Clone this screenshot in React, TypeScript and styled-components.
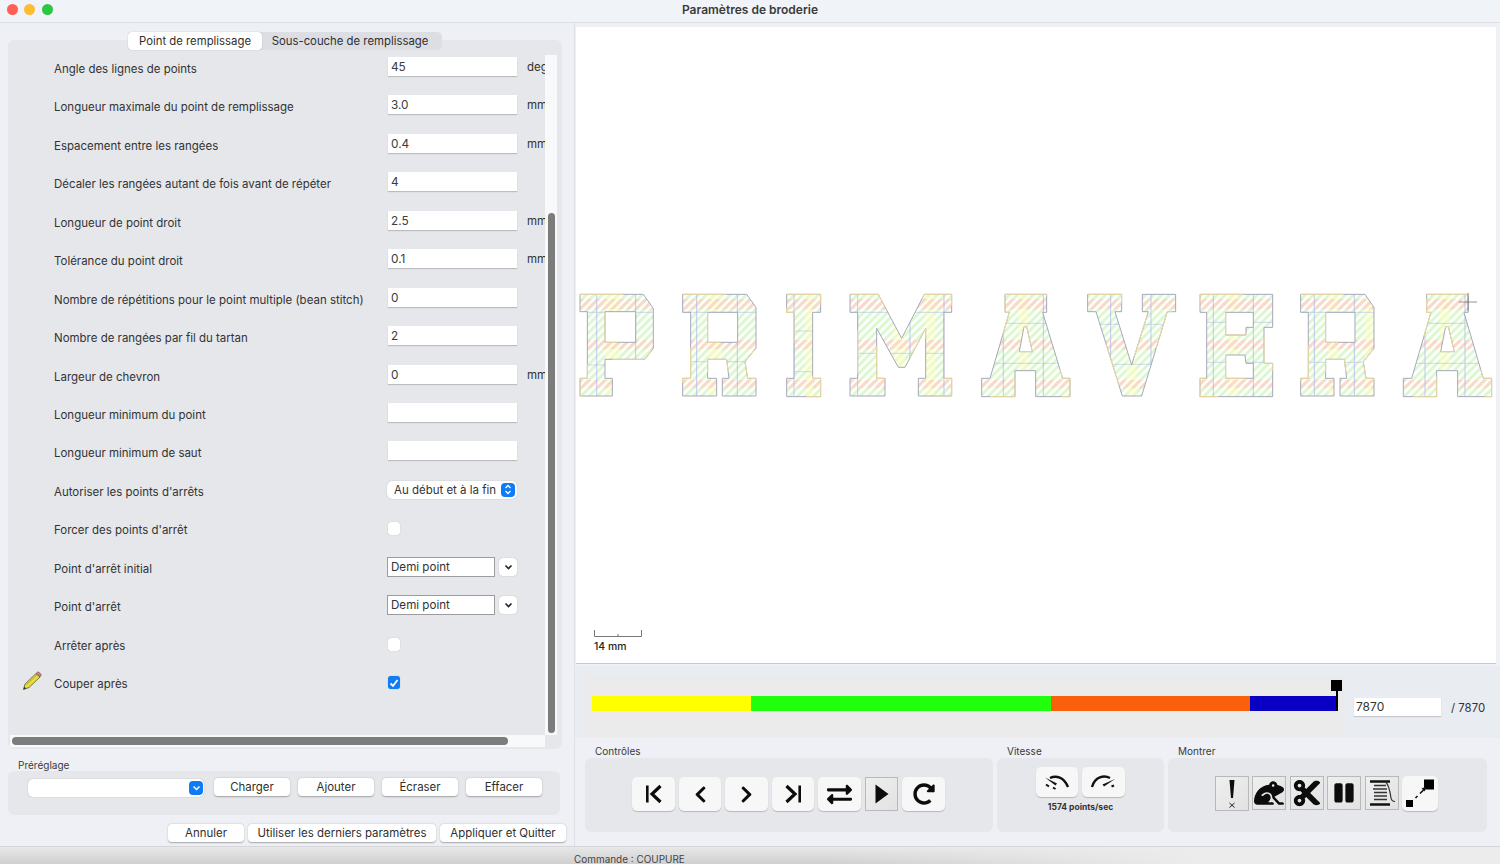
import { FunctionComponent } from "react";
import styled, { createGlobalStyle } from "styled-components";
import { FaChevronLeft, FaChevronRight, FaCut, FaExchangeAlt, FaFrog, FaPause, FaRedoAlt } from "react-icons/fa";

const GlobalStyle = createGlobalStyle`
  html, body { margin: 0; padding: 0; width: 1500px; height: 864px; overflow: hidden; }
  body { font-family: Inter, "Liberation Sans", sans-serif; color: #333; }
  * { box-sizing: border-box; }
`;

const Window = styled.div`
  width: 1500px;
  height: 864px;
  display: flex;
  flex-direction: column;
  background: #eef0f5;
`;

const TitleBar = styled.div`
  height: 23px;
  flex: none;
  display: flex;
  align-items: center;
  padding: 0 0 3px 6.5px;
  gap: 6.5px;
  border-bottom: 1px solid #dcdfe3;
  background: #f0f3f8;
`;

const Light = styled.span<{ $color: string }>`
  width: 11px;
  height: 11px;
  border-radius: 50%;
  background: ${(p) => p.$color};
`;

const Title = styled.div`
  position: absolute;
  left: 0;
  width: 1500px;
  text-align: center;
  font-size: 12px;
  font-weight: 600;
  color: #3a3a3a;
`;

const Body = styled.div`
  height: 824px;
  flex: none;
  display: flex;
  border-bottom: 1px solid #d3d5d9;
`;

const LeftPane = styled.div`
  width: 575px;
  flex: none;
  display: flex;
  flex-direction: column;
  border-right: 1px solid #dfe1e5;
  margin-right: 0;
`;

const Tabs = styled.div`
  position: relative;
  z-index: 1;
  margin: 9px 0 0 128px;
  width: 314px;
  height: 18px;
  display: flex;
  background: #dcdee3;
  border-radius: 5px;
  font-size: 11.35px;
`;

const Tab = styled.div<{ $active?: boolean }>`
  width: ${(p) => (p.$active ? 134 : 176)}px;
  display: flex;
  align-items: center;
  justify-content: center;
  border-radius: 4px;
  color: #2f2f2f;
  background: ${(p) => (p.$active ? "#ffffff" : "transparent")};
  box-shadow: ${(p) => (p.$active ? "0 0 1px rgba(0,0,0,.35)" : "none")};
`;

const TabPanel = styled.div`
  margin: -10px 0 0 8px;
  width: 554px;
  height: 709px;
  padding: 15px 5px 0 2px;
  background: #e5e7eb;
  border-radius: 6px;
`;

const ScrollArea = styled.div`
  display: grid;
  grid-template-columns: 535px 12px;
  grid-template-rows: 680px 12px;
`;

const Form = styled.div`
  overflow: hidden;
`;

const Row = styled.div`
  height: 38.45px;
  display: flex;
  align-items: flex-start;
  width: 560px;
  font-size: 11.47px;
  color: #333;
`;

const IconSlot = styled.div`
  width: 44px;
  flex: none;
  padding: 1px 0 0 12px;
`;

const Label = styled.div`
  width: 334px;
  flex: none;
  margin-top: 6px;
  line-height: 16px;
`;

const TextInput = styled.div`
  width: 129px;
  height: 19px;
  margin-top: 2px;
  padding: 1px 0 0 3px;
  background: #fff;
  font-size: 11.8px;
  line-height: 18px;
  color: #3c3c3c;
  box-shadow: 0 1px 1px rgba(0, 0, 0, 0.18);
`;

const Unit = styled.div`
  margin: 4px 0 0 10px;
  font-size: 11.47px;
  line-height: 16px;
`;

const Select = styled.div`
  width: 130px;
  height: 18px;
  margin: 0 0 0 -1px;
  position: relative;
  top: 3px;
  display: flex;
  align-items: center;
  justify-content: space-between;
  padding: 0 2px 0 7px;
  background: #fff;
  border-radius: 5px;
  font-size: 11.47px;
  box-shadow: 0 0 1px rgba(0, 0, 0, 0.35);
`;

const BlueCap = styled.span`
  width: 14px;
  height: 14px;
  background: #0f7cf6;
  border-radius: 4px;
  display: flex;
  align-items: center;
  justify-content: center;
`;

const Check = styled.div<{ $on?: boolean }>`
  width: 12px;
  height: 13px;
  margin-top: 6px;
  border-radius: 3px;
  background: ${(p) => (p.$on ? "#0f7cf6" : "#fff")};
  box-shadow: 0 0 1px rgba(0, 0, 0, 0.3);
  display: flex;
  align-items: center;
  justify-content: center;
`;

const ComboEntry = styled.div`
  width: 108px;
  height: 20px;
  margin: 2px 0 0 -1px;
  padding-left: 3px;
  background: #fff;
  border: 1px solid #9c9c9c;
  font-size: 11.6px;
  line-height: 19px;
`;

const ComboButton = styled.div`
  width: 18px;
  height: 18px;
  margin: 3px 0 0 4px;
  background: #fff;
  border-radius: 4px;
  box-shadow: 0 0 1px rgba(0, 0, 0, 0.35);
  display: flex;
  align-items: center;
  justify-content: center;
`;

const VTrack = styled.div`
  background: #f8f9fa;
  padding: 158px 0 0 3px;
`;

const VThumb = styled.div`
  width: 7px;
  height: 520px;
  border-radius: 4px;
  background: #7c7c7c;
`;

const HTrack = styled.div`
  background: #f8f9fa;
  padding: 2px 0 0 2px;
`;

const HThumb = styled.div`
  width: 496px;
  height: 8px;
  border-radius: 4px;
  background: #7c7c7c;
`;

const GroupLabel = styled.div`
  height: 14px;
  padding-left: 10px;
  font-size: 10px;
  line-height: 14px;
  color: #3a3a3a;
`;

const PresetLabel = styled(GroupLabel)`
  margin: 10px 0 0 8px;
  height: 12px;
  line-height: 13px;
`;

const PresetBox = styled.div`
  margin-left: 8px;
  width: 552px;
  height: 44px;
  display: flex;
  gap: 8px;
  align-items: flex-start;
  padding: 7px 0 0 20px;
  background: #e5e7eb;
  border-radius: 6px;
`;

const PresetCombo = styled.div`
  width: 176px;
  height: 18px;
  margin: 1px 2px 0 0;
  display: flex;
  justify-content: flex-end;
  align-items: center;
  padding-right: 1px;
  background: #fff;
  border-radius: 5px;
  box-shadow: 0 0 1px rgba(0, 0, 0, 0.35);
`;

const PushButton = styled.div<{ $w: number }>`
  width: ${(p) => p.$w}px;
  height: 18px;
  display: flex;
  align-items: center;
  justify-content: center;
  background: #fff;
  border-radius: 4px;
  font-size: 11.45px;
  color: #2f2f2f;
  box-shadow: 0 0.5px 1.5px rgba(0, 0, 0, 0.3);
`;

const DialogButtons = styled.div`
  margin-top: 9px;
  padding-left: 168px;
  display: flex;
  gap: 4px;
`;

const RightPane = styled.div`
  flex: 1;
  min-width: 0;
  padding-top: 4px;
  display: flex;
  flex-direction: column;
`;

const Canvas = styled.div`
  position: relative;
  margin-left: 1px;
  width: 920px;
  height: 637px;
  flex: none;
  background: #fff;
  border-bottom: 1px solid #c6c8cb;
`;

const CanvasDrawing = styled.svg`
  display: block;
`;

const ScaleBar = styled.div`
  position: absolute;
  left: 18px;
  top: 603px;
  font-size: 10.4px;
  font-weight: 500;
  color: #222;
`;

const ScaleTicks = styled.svg`
  display: block;
  margin-bottom: 3px;
`;

const SliderBand = styled.div`
  margin-top: 2px;
  height: 72px;
  padding: 9px 0 0 10px;
  display: flex;
  background: #e9ecf1;
`;

const SliderBox = styled.div`
  position: relative;
  width: 760px;
  height: 62px;
  padding: 21px 0 0 7px;
  background: #ebebeb;
`;

const ColorBar = styled.div`
  width: 744px;
  height: 15px;
  display: flex;
`;

const ColorSegment = styled.div<{ $w: number; $color: string }>`
  width: ${(p) => p.$w}px;
  background: ${(p) => p.$color};
`;

const HandleTop = styled.div`
  position: absolute;
  left: 746px;
  top: 5px;
  width: 11px;
  height: 11px;
  background: #000;
`;

const HandleStem = styled.div`
  position: absolute;
  left: 751px;
  top: 16px;
  width: 1.5px;
  height: 20px;
  background: #000;
`;

const StepInput = styled.div`
  width: 87px;
  height: 18px;
  margin: 23px 0 0 9px;
  padding-left: 2px;
  background: #fff;
  font-size: 12px;
  line-height: 18px;
  box-shadow: 0 1px 1px rgba(0, 0, 0, 0.15);
`;

const StepTotal = styled.div`
  margin: 24px 0 0 10px;
  font-size: 11.42px;
  line-height: 18px;
`;

const Groups = styled.div`
  margin-top: 6px;
  padding-left: 10px;
  display: flex;
  gap: 4px;
`;

const GroupBox = styled.div<{ $w: number; $top: number }>`
  width: ${(p) => p.$w}px;
  height: 74px;
  display: flex;
  flex-direction: column;
  align-items: center;
  padding-top: ${(p) => p.$top}px;
  background: #e5e7eb;
  border-radius: 6px;
`;

const ToolRow = styled.div<{ $gap: number; $offset?: number }>`
  display: flex;
  gap: ${(p) => p.$gap}px;
  margin-left: ${(p) => p.$offset || 0}px;
`;

const ToolButton = styled.div<{ $w: number; $h: number; $pressed?: boolean }>`
  width: ${(p) => p.$w}px;
  height: ${(p) => p.$h}px;
  display: flex;
  align-items: center;
  justify-content: center;
  color: #0c0c0c;
  background: ${(p) => (p.$pressed ? "linear-gradient(135deg,#efefef,#e2e2e2)" : "#f7f7f7")};
  border: ${(p) => (p.$pressed ? "1px solid #b9b9b9" : "none")};
  border-radius: ${(p) => (p.$pressed ? 0 : 5)}px;
  box-shadow: ${(p) => (p.$pressed ? "none" : "0 1px 1px rgba(0,0,0,.2)")};
`;

const SpeedText = styled.div`
  margin-top: 5px;
  font-size: 8.5px;
  font-weight: 700;
  line-height: 11px;
  color: #333;
`;

const StatusBar = styled.div`
  flex: 1;
  padding-left: 574px;
  font-size: 9.95px;
  line-height: 24px;
  color: #444;
  overflow: hidden;
  background: linear-gradient(90deg, rgba(236, 236, 236, 0) 55%, #ececec 80%), linear-gradient(180deg, #e8e8e8, #cfcfcf);
`;

type Letter = {
  id: string;
  origin: [number, number];
  d: string;
  v: number[];
  h: number[];
  y: [number, number][];
};

const LETTERS: Letter[] = [
  {
    id: "p",
    origin: [575, 280],
    d: "M15 43H205L235 85V205L210 238H90V295H112V348H15V295H37V95H15ZM90 95V187H182V95Z",
    v: [65, 182],
    h: [97, 255],
    y: [[90, 135]],
  },
  {
    id: "r",
    origin: [575, 280],
    d: "M323 43H515L543 82V205L510 245L518 295H543V348H442V295H462L455 238H398V295H425V348H323V295H347V97H323ZM398 97V187H488V97Z",
    v: [365, 487],
    h: [97, 245],
    y: [[400, 440]],
  },
  {
    id: "i",
    origin: [575, 280],
    d: "M635 43H737V97H713V295H737V350H635V295H657V97H635Z",
    v: [657],
    h: [153, 275],
    y: [[690, 715]],
  },
  {
    id: "m",
    origin: [870, 280],
    d: "M-60 43H25L95 175L163 43H245V97H222V295H245V348H145V295H167V145L105 262H85L20 145V295H45V348H-60V295H-37V97H-60Z",
    v: [-37, 120, 222],
    h: [97, 220],
    y: [[165, 195], [70, 105]],
  },
  {
    id: "a",
    origin: [870, 280],
    d: "M405 43H530V97H518L578 295H600V350H497V272H435V350H335V295H360L418 97H405ZM448 215H487L470 140H462Z",
    v: [400, 520],
    h: [130, 250],
    y: [[445, 475]],
  },
  {
    id: "v",
    origin: [870, 280],
    d: "M653 43H755V95H735L785 255L835 95H817V43H917V95H892L815 348H757L678 95H653Z",
    v: [722, 843],
    h: [133, 253],
    y: [[770, 800]],
  },
  {
    id: "e",
    origin: [1190, 280],
    d: "M30 43H248V142H222V250H248V350H30V295H50V97H30ZM107 97V165H168V142H190V97ZM107 225V295H190V250H168L165 225Z",
    v: [70, 190],
    h: [127, 247],
    y: [[115, 145]],
  },
  {
    id: "r2",
    origin: [1190, 280],
    d: "M332 43H525L552 82V205L520 245L528 295H552V348H450V295H470L463 238H407V295H432V348H332V295H355V97H332ZM407 97V187H495V97Z",
    v: [373, 493],
    h: [97, 247],
    y: [[415, 445], [525, 550]],
  },
  {
    id: "a2",
    origin: [1190, 280],
    d: "M710 43H835V97H822L880 295H905V350H803V272H740V350H640V295H665L723 97H710ZM752 215H793L775 140H767Z",
    v: [705, 825],
    h: [130, 250],
    y: [[750, 780]],
  },
];

const BANDS: [number, number][] = [
  [57, 88],
  [180, 208],
  [300, 325],
];

const StitchPreview: FunctionComponent = () => (
  <CanvasDrawing width="920" height="636" viewBox="576 27 920 636">
    <defs>
      <pattern id="greenHatch" width="17" height="17" patternUnits="userSpaceOnUse" patternTransform="rotate(-45)">
        <rect width="17" height="9" fill="#dcf8d0" />
      </pattern>
      <pattern id="orangeHatch" width="17" height="17" patternUnits="userSpaceOnUse" patternTransform="rotate(-45)">
        <rect width="17" height="9" fill="#fbd9ca" />
      </pattern>
    </defs>
    {LETTERS.map((l) => (
      <g key={l.id} transform={`translate(${l.origin[0]} ${l.origin[1]}) scale(0.3333)`}>
        <clipPath id={`clip-${l.id}`}>
          <path d={l.d} clipRule="evenodd" />
        </clipPath>
        <g clipPath={`url(#clip-${l.id})`}>
          <rect x="-100" y="0" width="1100" height="400" fill="url(#greenHatch)" />
          {l.y.map(([a, b]) => (
            <rect key={a} x={a} y="0" width={b - a} height="400" fill="#ffffc0" opacity="0.45" />
          ))}
          {BANDS.map(([a, b]) => (
            <rect key={a} x="-100" y={a} width="1100" height={b - a} fill="url(#orangeHatch)" />
          ))}
          {l.v.map((x) => (
            <line key={x} x1={x} x2={x} y1="0" y2="400" stroke="#b3bdea" strokeWidth="2.5" />
          ))}
          {l.h.map((y) => (
            <line key={y} x1="-100" x2="1000" y1={y} y2={y} stroke="#b6c2e8" strokeWidth="2" />
          ))}
        </g>
        <path d={l.d} fill="none" stroke="#a5a8bd" strokeWidth="3" />
        <path d={l.d} fill="none" stroke="#ecd9a0" strokeWidth="3" strokeDasharray="130 240" />
      </g>
    ))}
    <g stroke="#777" strokeWidth="0.8">
      <line x1="1459" x2="1477" y1="302" y2="302" />
      <line x1="1468" x2="1468" y1="293" y2="311" />
    </g>
  </CanvasDrawing>
);

const Chevron: FunctionComponent = () => (
  <svg width="9" height="6" viewBox="0 0 9 6">
    <path d="M1.5 1.5L4.5 4.5L7.5 1.5" fill="none" stroke="#222" strokeWidth="1.6" />
  </svg>
);

const Pencil: FunctionComponent = () => (
  <svg width="20" height="20" viewBox="0 0 20 20">
    <path d="M1.5 18.5L3 13L14 2.5L18 6L7 16.5Z" fill="#e9dd3e" stroke="#5b5b2a" strokeWidth="0.8" />
    <path d="M14 2.5L15.5 1.2C16 .8 16.6 .8 17 1.2L19 3.2C19.3 3.6 19.3 4.1 19 4.5L18 6Z" fill="#c77f86" stroke="#6b5050" strokeWidth="0.6" />
    <path d="M1.5 18.5L2.2 15.8L4.3 17.6Z" fill="#333" />
    <path d="M4.5 13.6L15 3.8" stroke="#a39a20" strokeWidth="0.8" />
  </svg>
);

const SkipStart: FunctionComponent = () => (
  <svg width="20" height="20" viewBox="0 0 20 20">
    <rect x="2" y="1.5" width="2.6" height="17" fill="#0c0c0c" />
    <path d="M16.5 2L8 10L16.5 18" fill="none" stroke="#0c0c0c" strokeWidth="3.2" />
  </svg>
);

const SkipEnd: FunctionComponent = () => (
  <svg width="20" height="20" viewBox="0 0 20 20">
    <rect x="15.4" y="1.5" width="2.6" height="17" fill="#0c0c0c" />
    <path d="M3.5 2L12 10L3.5 18" fill="none" stroke="#0c0c0c" strokeWidth="3.2" />
  </svg>
);

const PlayMark: FunctionComponent = () => (
  <svg width="14" height="20" viewBox="0 0 14 20">
    <path d="M0.5 0.5L13.5 10L0.5 19.5Z" fill="#0c0c0c" />
  </svg>
);

const SlowGauge: FunctionComponent = () => (
  <svg width="26" height="16" viewBox="0 0 26 16">
    <path d="M6 4C12 1 20 3 24 13" fill="none" stroke="#111" strokeWidth="2.4" />
    <path d="M1 3.5L13 9.5L11.5 11.5Z" fill="#111" />
    <path d="M2 10.5L5 12.5M9 13.5L11.5 15" stroke="#111" strokeWidth="2" />
  </svg>
);

const FastGauge: FunctionComponent = () => (
  <svg width="26" height="16" viewBox="0 0 26 16">
    <path d="M2 13C5 2.5 14 1 20 4" fill="none" stroke="#111" strokeWidth="2.4" />
    <path d="M25 5L12.5 10.5L14 12.5Z" fill="#111" />
    <path d="M24 11.5L21.5 12.5" stroke="#111" strokeWidth="2" />
  </svg>
);

const StopMark: FunctionComponent = () => (
  <svg width="16" height="30" viewBox="0 0 16 30">
    <path d="M5.5 1H10.5L9 19H7Z" fill="#0c0c0c" />
    <path d="M5.5 24L10.5 28.5M10.5 24L5.5 28.5" stroke="#222" strokeWidth="1" />
  </svg>
);

const Spool: FunctionComponent = () => (
  <svg width="28" height="28" viewBox="0 0 28 28">
    <path d="M2 2.5H22M2 25.5H22" stroke="#111" strokeWidth="2.4" />
    <path d="M6 6.5H18M5 10H19M6 13.5H19M6 17H19M6 20.5H19" stroke="#333" strokeWidth="1.3" />
    <path d="M18 3.5C21 6 22 12 23 19C23.4 21 25 22.5 27 22.5" fill="none" stroke="#333" strokeWidth="1.2" />
  </svg>
);

const JumpMark: FunctionComponent = () => (
  <svg width="30" height="30" viewBox="0 0 30 30">
    <rect x="19" y="0.5" width="10" height="10" fill="#000" />
    <rect x="1" y="21" width="7" height="7" fill="#000" />
    <path d="M10.5 19L12.5 17M15 14.5L19.5 10" stroke="#111" strokeWidth="1.6" />
    <path d="M21 8L16.5 9.2L19.8 12.5Z" fill="#111" />
  </svg>
);

const FIELDS: [string, string, string?][] = [
  ["Angle des lignes de points", "45", "deg"],
  ["Longueur maximale du point de remplissage", "3.0", "mm"],
  ["Espacement entre les rangées", "0.4", "mm"],
  ["Décaler les rangées autant de fois avant de répéter", "4"],
  ["Longueur de point droit", "2.5", "mm"],
  ["Tolérance du point droit", "0.1", "mm"],
  ["Nombre de répétitions pour le point multiple (bean stitch)", "0"],
  ["Nombre de rangées par fil du tartan", "2"],
  ["Largeur de chevron", "0", "mm"],
  ["Longueur minimum du point", ""],
  ["Longueur minimum de saut", ""],
];

const SEGMENTS: [number, string][] = [
  [159, "#ffff00"],
  [300, "#22ff0c"],
  [199, "#f95f0d"],
  [86, "#0a00c4"],
];

const App: FunctionComponent = () => (
  <Window>
    <GlobalStyle />
    <TitleBar>
      <Light $color="#ff5f57" />
      <Light $color="#febc2e" />
      <Light $color="#28c840" />
      <Title>Paramètres de broderie</Title>
    </TitleBar>
    <Body>
      <LeftPane>
        <Tabs>
          <Tab $active>Point de remplissage</Tab>
          <Tab>Sous-couche de remplissage</Tab>
        </Tabs>
        <TabPanel>
          <ScrollArea>
            <Form>
              {FIELDS.map(([label, value, unit]) => (
                <Row key={label}>
                  <IconSlot />
                  <Label>{label}</Label>
                  <TextInput>{value}</TextInput>
                  {unit && <Unit>{unit}</Unit>}
                </Row>
              ))}
              <Row>
                <IconSlot />
                <Label>Autoriser les points d'arrêts</Label>
                <Select>
                  Au début et à la fin
                  <BlueCap>
                    <svg width="8" height="11" viewBox="0 0 8 11">
                      <path d="M1.5 4L4 1.5L6.5 4M1.5 7L4 9.5L6.5 7" fill="none" stroke="#fff" strokeWidth="1.3" />
                    </svg>
                  </BlueCap>
                </Select>
              </Row>
              <Row>
                <IconSlot />
                <Label>Forcer des points d'arrêt</Label>
                <Check />
              </Row>
              <Row>
                <IconSlot />
                <Label>Point d'arrêt initial</Label>
                <ComboEntry>Demi point</ComboEntry>
                <ComboButton>
                  <Chevron />
                </ComboButton>
              </Row>
              <Row>
                <IconSlot />
                <Label>Point d'arrêt</Label>
                <ComboEntry>Demi point</ComboEntry>
                <ComboButton>
                  <Chevron />
                </ComboButton>
              </Row>
              <Row>
                <IconSlot />
                <Label>Arrêter après</Label>
                <Check />
              </Row>
              <Row>
                <IconSlot>
                  <Pencil />
                </IconSlot>
                <Label>Couper après</Label>
                <Check $on>
                  <svg width="10" height="10" viewBox="0 0 10 10">
                    <path d="M1.5 5.5L4 8L8.5 2" fill="none" stroke="#fff" strokeWidth="1.8" />
                  </svg>
                </Check>
              </Row>
            </Form>
            <VTrack>
              <VThumb />
            </VTrack>
            <HTrack>
              <HThumb />
            </HTrack>
          </ScrollArea>
        </TabPanel>
        <PresetLabel>Préréglage</PresetLabel>
        <PresetBox>
          <PresetCombo>
            <BlueCap>
              <svg width="9" height="6" viewBox="0 0 9 6">
                <path d="M1.5 1.5L4.5 4.5L7.5 1.5" fill="none" stroke="#fff" strokeWidth="1.5" />
              </svg>
            </BlueCap>
          </PresetCombo>
          <PushButton $w={76}>Charger</PushButton>
          <PushButton $w={76}>Ajouter</PushButton>
          <PushButton $w={76}>Écraser</PushButton>
          <PushButton $w={76}>Effacer</PushButton>
        </PresetBox>
        <DialogButtons>
          <PushButton $w={76}>Annuler</PushButton>
          <PushButton $w={188}>Utiliser les derniers paramètres</PushButton>
          <PushButton $w={126}>Appliquer et Quitter</PushButton>
        </DialogButtons>
      </LeftPane>
      <RightPane>
        <Canvas>
          <StitchPreview />
          <ScaleBar>
            <ScaleTicks width="48" height="7" viewBox="0 0 48 7">
              <path d="M0.5 0V6.5H47.5V0M24 4V6.5" fill="none" stroke="#777" strokeWidth="1" />
            </ScaleTicks>
            14 mm
          </ScaleBar>
        </Canvas>
        <SliderBand>
          <SliderBox>
            <ColorBar>
              {SEGMENTS.map(([w, color]) => (
                <ColorSegment key={color} $w={w} $color={color} />
              ))}
            </ColorBar>
            <HandleTop />
            <HandleStem />
          </SliderBox>
          <StepInput>7870</StepInput>
          <StepTotal>/ 7870</StepTotal>
        </SliderBand>
        <Groups>
          <div>
            <GroupLabel>Contrôles</GroupLabel>
            <GroupBox $w={408} $top={19}>
              <ToolRow $gap={4} $offset={-1}>
                <ToolButton $w={43} $h={34}><SkipStart /></ToolButton>
                <ToolButton $w={42} $h={34}><FaChevronLeft size={19} /></ToolButton>
                <ToolButton $w={43} $h={34}><FaChevronRight size={19} /></ToolButton>
                <ToolButton $w={42} $h={34}><SkipEnd /></ToolButton>
                <ToolButton $w={43} $h={34}><FaExchangeAlt size={25} /></ToolButton>
                <ToolButton $w={33} $h={34} $pressed><PlayMark /></ToolButton>
                <ToolButton $w={43} $h={34}><FaRedoAlt size={22} /></ToolButton>
              </ToolRow>
            </GroupBox>
          </div>
          <div>
            <GroupLabel>Vitesse</GroupLabel>
            <GroupBox $w={167} $top={9}>
              <ToolRow $gap={4} $offset={-1}>
                <ToolButton $w={42} $h={30}><SlowGauge /></ToolButton>
                <ToolButton $w={43} $h={30}><FastGauge /></ToolButton>
              </ToolRow>
              <SpeedText>1574 points/sec</SpeedText>
            </GroupBox>
          </div>
          <div>
            <GroupLabel>Montrer</GroupLabel>
            <GroupBox $w={319} $top={18}>
              <ToolRow $gap={3.6} $offset={-2}>
                <ToolButton $w={34} $h={35} $pressed><StopMark /></ToolButton>
                <ToolButton $w={34} $h={34} $pressed><FaFrog size={30} /></ToolButton>
                <ToolButton $w={34} $h={34} $pressed><FaCut size={30} /></ToolButton>
                <ToolButton $w={34} $h={34} $pressed><FaPause size={22} /></ToolButton>
                <ToolButton $w={34} $h={34} $pressed><Spool /></ToolButton>
                <ToolButton $w={36} $h={35}><JumpMark /></ToolButton>
              </ToolRow>
            </GroupBox>
          </div>
        </Groups>
      </RightPane>
    </Body>
    <StatusBar>Commande : COUPURE</StatusBar>
  </Window>
);

export default App;
